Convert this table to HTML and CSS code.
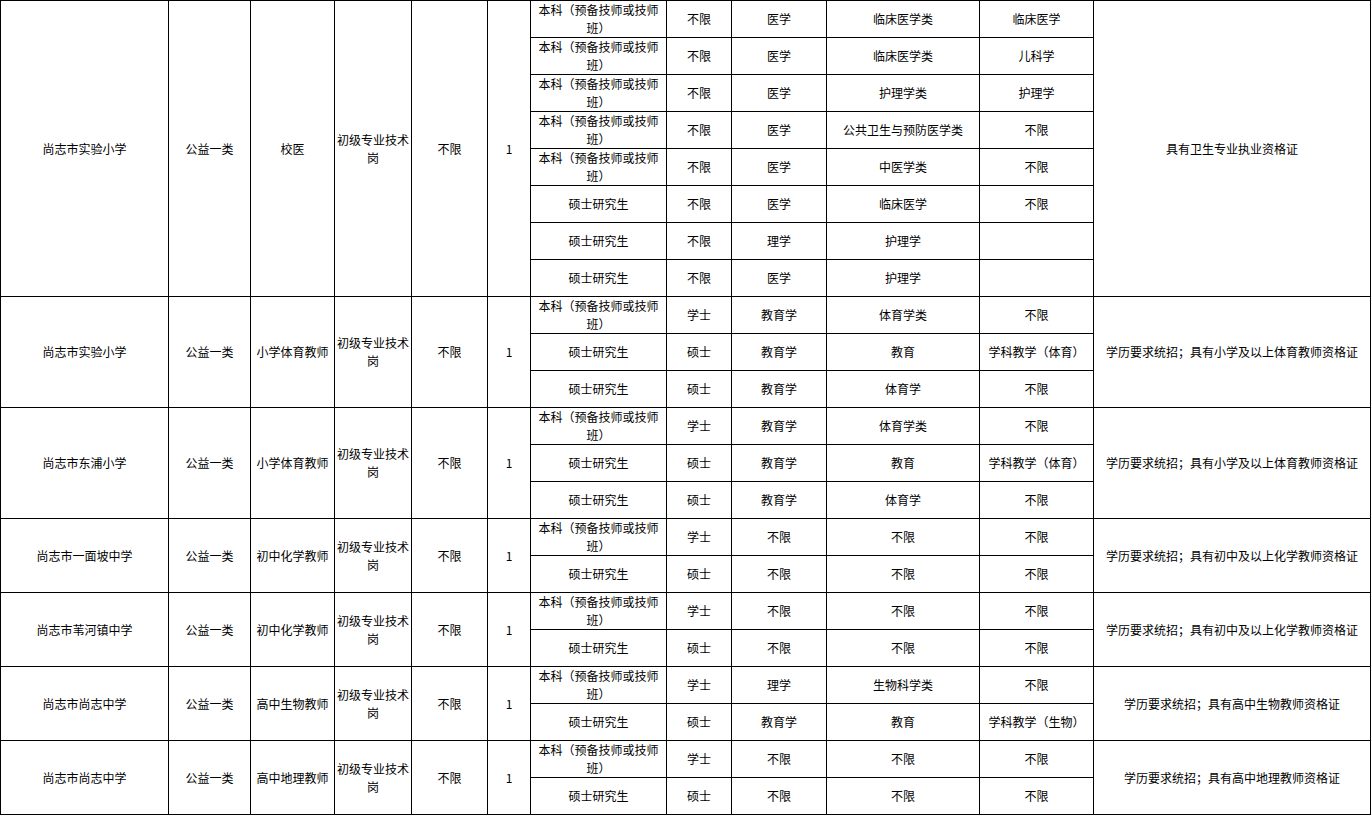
FILE: index.html
```html
<!DOCTYPE html>
<html lang="zh-CN">
<head>
<meta charset="utf-8">
<title>岗位表</title>
<link rel="stylesheet" href="styles.css">
</head>
<body>
<table class="grid">
<colgroup>
<col class="c1"><col class="c2"><col class="c3"><col class="c4"><col class="c5"><col class="c6">
<col class="c7"><col class="c8"><col class="c9"><col class="c10"><col class="c11"><col class="c12">
</colgroup>
<tbody>
<tr>
<td rowspan="8">尚志市实验小学</td><td rowspan="8">公益一类</td><td rowspan="8">校医</td><td rowspan="8">初级专业技术岗</td><td rowspan="8">不限</td><td rowspan="8">1</td>
<td>本科（预备技师或技师班）</td><td>不限</td><td>医学</td><td>临床医学类</td><td>临床医学</td>
<td rowspan="8">具有卫生专业执业资格证</td>
</tr>
<tr><td>本科（预备技师或技师班）</td><td>不限</td><td>医学</td><td>临床医学类</td><td>儿科学</td></tr>
<tr><td>本科（预备技师或技师班）</td><td>不限</td><td>医学</td><td>护理学类</td><td>护理学</td></tr>
<tr><td>本科（预备技师或技师班）</td><td>不限</td><td>医学</td><td>公共卫生与预防医学类</td><td>不限</td></tr>
<tr><td>本科（预备技师或技师班）</td><td>不限</td><td>医学</td><td>中医学类</td><td>不限</td></tr>
<tr><td>硕士研究生</td><td>不限</td><td>医学</td><td>临床医学</td><td>不限</td></tr>
<tr><td>硕士研究生</td><td>不限</td><td>理学</td><td>护理学</td><td></td></tr>
<tr><td>硕士研究生</td><td>不限</td><td>医学</td><td>护理学</td><td></td></tr>

<tr>
<td rowspan="3">尚志市实验小学</td><td rowspan="3">公益一类</td><td rowspan="3">小学体育教师</td><td rowspan="3">初级专业技术岗</td><td rowspan="3">不限</td><td rowspan="3">1</td>
<td>本科（预备技师或技师班）</td><td>学士</td><td>教育学</td><td>体育学类</td><td>不限</td>
<td rowspan="3">学历要求统招；具有小学及以上体育教师资格证</td>
</tr>
<tr><td>硕士研究生</td><td>硕士</td><td>教育学</td><td>教育</td><td>学科教学（体育）</td></tr>
<tr><td>硕士研究生</td><td>硕士</td><td>教育学</td><td>体育学</td><td>不限</td></tr>

<tr>
<td rowspan="3">尚志市东浦小学</td><td rowspan="3">公益一类</td><td rowspan="3">小学体育教师</td><td rowspan="3">初级专业技术岗</td><td rowspan="3">不限</td><td rowspan="3">1</td>
<td>本科（预备技师或技师班）</td><td>学士</td><td>教育学</td><td>体育学类</td><td>不限</td>
<td rowspan="3">学历要求统招；具有小学及以上体育教师资格证</td>
</tr>
<tr><td>硕士研究生</td><td>硕士</td><td>教育学</td><td>教育</td><td>学科教学（体育）</td></tr>
<tr><td>硕士研究生</td><td>硕士</td><td>教育学</td><td>体育学</td><td>不限</td></tr>

<tr>
<td rowspan="2">尚志市一面坡中学</td><td rowspan="2">公益一类</td><td rowspan="2">初中化学教师</td><td rowspan="2">初级专业技术岗</td><td rowspan="2">不限</td><td rowspan="2">1</td>
<td>本科（预备技师或技师班）</td><td>学士</td><td>不限</td><td>不限</td><td>不限</td>
<td rowspan="2">学历要求统招；具有初中及以上化学教师资格证</td>
</tr>
<tr><td>硕士研究生</td><td>硕士</td><td>不限</td><td>不限</td><td>不限</td></tr>

<tr>
<td rowspan="2">尚志市苇河镇中学</td><td rowspan="2">公益一类</td><td rowspan="2">初中化学教师</td><td rowspan="2">初级专业技术岗</td><td rowspan="2">不限</td><td rowspan="2">1</td>
<td>本科（预备技师或技师班）</td><td>学士</td><td>不限</td><td>不限</td><td>不限</td>
<td rowspan="2">学历要求统招；具有初中及以上化学教师资格证</td>
</tr>
<tr><td>硕士研究生</td><td>硕士</td><td>不限</td><td>不限</td><td>不限</td></tr>

<tr>
<td rowspan="2">尚志市尚志中学</td><td rowspan="2">公益一类</td><td rowspan="2">高中生物教师</td><td rowspan="2">初级专业技术岗</td><td rowspan="2">不限</td><td rowspan="2">1</td>
<td>本科（预备技师或技师班）</td><td>学士</td><td>理学</td><td>生物科学类</td><td>不限</td>
<td rowspan="2">学历要求统招；具有高中生物教师资格证</td>
</tr>
<tr><td>硕士研究生</td><td>硕士</td><td>教育学</td><td>教育</td><td>学科教学（生物）</td></tr>

<tr>
<td rowspan="2">尚志市尚志中学</td><td rowspan="2">公益一类</td><td rowspan="2">高中地理教师</td><td rowspan="2">初级专业技术岗</td><td rowspan="2">不限</td><td rowspan="2">1</td>
<td>本科（预备技师或技师班）</td><td>学士</td><td>不限</td><td>不限</td><td>不限</td>
<td rowspan="2">学历要求统招；具有高中地理教师资格证</td>
</tr>
<tr><td>硕士研究生</td><td>硕士</td><td>不限</td><td>不限</td><td>不限</td></tr>
</tbody>
</table>
</body>
</html>
```
FILE: styles.css
```css
html, body {
  margin: 0;
  padding: 0;
  background: #ffffff;
}
body {
  font-family: "Noto Sans CJK SC", "Microsoft YaHei", sans-serif;
  font-size: 12px;
  color: #000000;
}
.grid {
  border-collapse: collapse;
  table-layout: fixed;
  width: 1371px;
}
.grid tr {
  height: 37px;
}
.grid td {
  border: 1px solid #000000;
  padding: 0 2px;
  text-align: center;
  vertical-align: middle;
  line-height: 18px;
  word-break: break-all;
}
.c1 { width: 168px; }
.c2 { width: 82px; }
.c3 { width: 84px; }
.c4 { width: 77px; }
.c5 { width: 76px; }
.c6 { width: 43px; }
.c7 { width: 136px; }
.c8 { width: 65px; }
.c9 { width: 95px; }
.c10 { width: 153px; }
.c11 { width: 114px; }
.c12 { width: 277px; }
```
